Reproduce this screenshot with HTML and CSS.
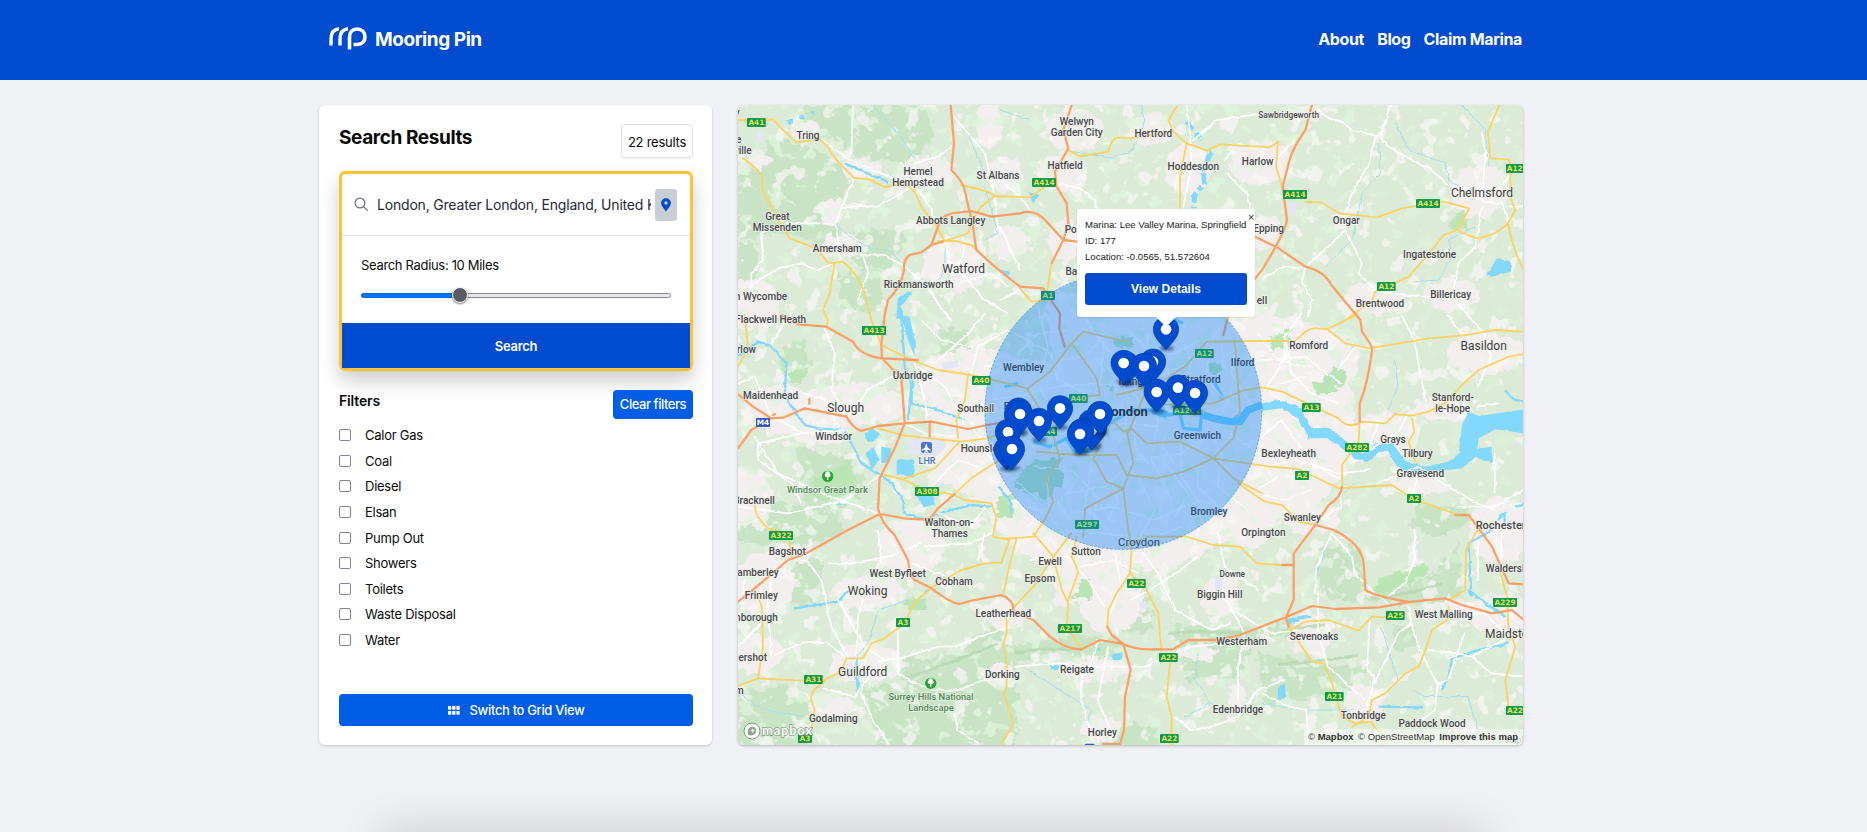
FILE: index.html
```html
<!DOCTYPE html>
<html lang="en">
<head>
<meta charset="utf-8">
<title>Mooring Pin</title>
<link rel="stylesheet" href="styles.css">
</head>
<body>
<header class="header">
  <div class="header-inner">
    <a class="brand">
      <svg class="logo" width="38" height="24" viewBox="0 0 38 24" fill="none" stroke="#fff">
        <path d="M2 18.500V12C2 6 5 2.300 10 1.700" stroke-width="3.400"/>
        <path d="M11 18.500V12C11 6 14 2.300 19 1.700" stroke-width="3.400"/>
        <path d="M20.500 22.500V10.500C20.500 5 23.500 2 28 2c5 0 8 3.200 8 8s-3 7.500-8 7.500h-3.500" stroke-width="3.600"/>
      </svg>
      <span class="brand-name">Mooring Pin</span>
    </a>
    <nav class="nav"><a>About</a><a>Blog</a><a>Claim Marina</a></nav>
  </div>
</header>
<main class="main">
  <aside class="panel">
    <div class="title-row"><h1>Search Results</h1><span class="count">22 results</span></div>
    <form class="search">
      <div class="search-row">
        <svg width="15" height="15" viewBox="0 0 15 15" fill="none" stroke="#6b7280" stroke-width="1.200"><circle cx="6" cy="6" r="4.900"/><path d="M9.500 9.500l4.300 4.300"/></svg>
        <span class="query">London, Greater London, England, United Kingdom</span>
        <span class="locate"><svg width="10" height="14" viewBox="0 0 10 14"><path fill="#004bce" fill-rule="evenodd" d="M5 .3C2.300.3.100 2.400.1 5.100.1 7.500 3 11 5 13.500 7 11 9.900 7.500 9.900 5.100 9.900 2.400 7.700.3 5 .3zM5 3.300a1.700 1.700 0 110 3.400 1.700 1.700 0 010-3.400z"/></svg></span>
      </div>
      <div class="radius">
        <label>Search Radius: 10 Miles</label>
        <div class="track"><div class="fill"></div><div class="thumb"></div></div>
      </div>
      <div class="submit">Search</div>
    </form>
    <div class="filter-head"><h2>Filters</h2><span class="clear">Clear filters</span></div>
    <ul class="filters">
      <li><i></i>Calor Gas</li><li><i></i>Coal</li><li><i></i>Diesel</li><li><i></i>Elsan</li><li><i></i>Pump Out</li><li><i></i>Showers</li><li><i></i>Toilets</li><li><i></i>Waste Disposal</li><li><i></i>Water</li>
    </ul>
    <div class="switch"><svg width="12" height="9" viewBox="0 0 12 9" fill="#fff"><rect width="3.300" height="3.800" rx=".6"/><rect x="4.200" width="3.300" height="3.800" rx=".6"/><rect x="8.400" width="3.300" height="3.800" rx=".6"/><rect y="4.900" width="3.300" height="3.800" rx=".6"/><rect x="4.200" y="4.900" width="3.300" height="3.800" rx=".6"/><rect x="8.400" y="4.900" width="3.300" height="3.800" rx=".6"/></svg>Switch to Grid View</div>
  </aside>
  <section class="map">
  <svg class="canvas" viewBox="0 15 2355 1920" preserveAspectRatio="none">
    <defs>
      <filter id="rough" x="0" y="0" width="100%" height="100%"><feTurbulence type="fractalNoise" baseFrequency=".035" numOctaves="3" seed="4"/><feDisplacementMap in="SourceGraphic" scale="44" xChannelSelector="R" yChannelSelector="G"/></filter>
      <filter id="wiggle" x="0" y="0" width="100%" height="100%"><feTurbulence type="fractalNoise" baseFrequency=".05" numOctaves="2" seed="9"/><feDisplacementMap in="SourceGraphic" scale="10" xChannelSelector="R" yChannelSelector="G"/></filter>
      <filter id="woods" x="0" y="0" width="100%" height="100%"><feTurbulence type="fractalNoise" baseFrequency=".022" numOctaves="3" seed="21"/><feColorMatrix values="0 0 0 0 .745  0 0 0 0 .905  0 0 0 0 .725  16 0 0 0 -9.600"/></filter>
      <filter id="clearing" x="0" y="0" width="100%" height="100%"><feTurbulence type="fractalNoise" baseFrequency=".02" numOctaves="3" seed="33"/><feColorMatrix values="0 0 0 0 .955  0 0 0 0 .94  0 0 0 0 .935  0 16 0 0 -10"/></filter>
      <filter id="soft" x="-50%" y="-100%" width="200%" height="300%"><feGaussianBlur stdDeviation="5"/></filter>
      <g id="pin"><ellipse cx="2" cy="57" rx="22" ry="8" fill="#001a40" opacity=".5" filter="url(#soft)"/><path d="M0-38C-22-38-38-21-38 0-38 22-18 42 0 61 18 42 38 22 38 0 38-21 22-38 0-38z" fill="#004bce" stroke="#003fae" stroke-width="2"/><circle r="16" fill="#fff"/></g>
    </defs>
    <rect y="15" width="2357" height="1920" fill="#dcebd7"/>
    <g filter="url(#rough)">
      <g fill="#c9e4c5">
        <path d="M0 220L70 200 100 110 220 140 290 180 340 250 290 330 300 420 240 430 130 400 0 420zM190 15H345L350 150 280 125 210 90zM375 15H560L590 110 540 170 490 190 420 180 350 160zM330 400L480 380 510 430 450 500 380 510 310 450zM0 430L60 430 60 540 0 560z"/>
        <path d="M300 520L420 510 440 600 400 640 300 620zM130 740L200 720 220 800 140 820zM170 1040L330 1070 390 1170 340 1220 200 1225zM0 1240L80 1210 300 1230 320 1300 200 1340 0 1330z"/>
        <path d="M140 1340L260 1390 230 1520 100 1500zM0 1780L140 1760 220 1830 210 1960H-20zM370 1760L500 1760 620 1690 780 1610 830 1640 830 1960H430zM420 1690L640 1660 800 1560 790 1680 500 1740z"/>
        <path d="M800 1640L960 1610 1100 1610 1180 1640 1060 1680 960 1650 830 1690zM1150 1480L1240 1500 1250 1590 1150 1600zM1300 1570L1500 1590 1650 1560 1760 1560 1780 1600 1560 1620 1500 1730 1340 1740zM1560 1660L1700 1680 1780 1700 1900 1700 1840 1760 1580 1830z"/>
        <path d="M1740 1340L1860 1340 1890 1500 2080 1430 2160 1330 2180 1480 2090 1510 1960 1510 1860 1510 1740 1490zM1960 1580L2030 1580 2040 1640 1980 1660zM2040 1200L2180 1220 2200 1270 2100 1310 2020 1280z"/>
        <path d="M1080 1870L1260 1880 1250 1960H1080zM2140 350L2200 330 2180 400 2130 380zM800 1760L850 1780 830 1960H790zM600 690L690 690 700 790 610 800z"/>
      </g>
      <g fill="#f3efee">
        <path d="M960 800Q890 640 950 560 980 610 1060 560 1160 470 1290 500L1360 560 1500 560 1600 640 1800 690 1870 760 1840 860 1850 970 1890 1060 1790 1150 1740 1230 1620 1260 1560 1350 1440 1330 1310 1410 1150 1400 1080 1500 960 1520 940 1410 800 1330 740 1220 640 1160 570 1160 600 1020 540 900 560 780 700 740z"/>
        <ellipse cx="195" cy="92" rx="42" ry="28"/><ellipse cx="565" cy="215" rx="90" ry="48"/><ellipse cx="655" cy="490" rx="100" ry="85"/><ellipse cx="310" cy="440" rx="55" ry="42"/><ellipse cx="280" cy="335" rx="34" ry="44"/><ellipse cx="375" cy="205" rx="65" ry="28"/><ellipse cx="40" cy="610" rx="85" ry="75"/><ellipse cx="800" cy="225" rx="55" ry="55"/><ellipse cx="755" cy="70" rx="38" ry="75"/><ellipse cx="60" cy="180" rx="38" ry="24"/>
        <ellipse cx="1010" cy="90" rx="85" ry="65"/><ellipse cx="970" cy="220" rx="75" ry="55"/><ellipse cx="1240" cy="90" rx="65" ry="48"/><ellipse cx="1350" cy="210" rx="68" ry="75"/><ellipse cx="1570" cy="190" rx="95" ry="65"/><ellipse cx="980" cy="420" rx="50" ry="62"/><ellipse cx="810" cy="430" rx="60" ry="50"/><ellipse cx="1580" cy="400" rx="48" ry="48"/><ellipse cx="1700" cy="40" rx="60" ry="24"/>
        <ellipse cx="2225" cy="275" rx="90" ry="80"/><ellipse cx="1825" cy="350" rx="35" ry="20"/><ellipse cx="1910" cy="600" rx="90" ry="48"/><ellipse cx="2140" cy="585" rx="85" ry="48"/><ellipse cx="2060" cy="480" rx="40" ry="15"/><ellipse cx="2240" cy="760" rx="120" ry="65"/><ellipse cx="2110" cy="930" rx="90" ry="30"/><ellipse cx="1950" cy="1000" rx="105" ry="62"/><ellipse cx="2050" cy="1150" rx="85" ry="36"/><ellipse cx="2290" cy="1290" rx="95" ry="100"/><ellipse cx="2290" cy="1540" rx="100" ry="62"/><ellipse cx="2140" cy="1520" rx="65" ry="24"/>
        <ellipse cx="120" cy="930" rx="105" ry="75"/><ellipse cx="340" cy="915" rx="180" ry="62"/><ellipse cx="250" cy="1000" rx="85" ry="35"/><ellipse cx="20" cy="1190" rx="85" ry="85"/><ellipse cx="80" cy="1450" rx="90" ry="95"/><ellipse cx="160" cy="1360" rx="60" ry="30"/><ellipse cx="390" cy="1480" rx="110" ry="50"/><ellipse cx="390" cy="1690" rx="110" ry="60"/><ellipse cx="50" cy="1660" rx="90" ry="60"/><ellipse cx="520" cy="1340" rx="100" ry="90"/><ellipse cx="280" cy="1820" rx="70" ry="40"/><ellipse cx="800" cy="1540" rx="65" ry="48"/><ellipse cx="790" cy="1730" rx="45" ry="35"/>
        <ellipse cx="1070" cy="1710" rx="120" ry="36"/><ellipse cx="1090" cy="1890" rx="60" ry="40"/><ellipse cx="1120" cy="1500" rx="95" ry="100"/><ellipse cx="1450" cy="1490" rx="60" ry="60"/><ellipse cx="1720" cy="1600" rx="65" ry="65"/><ellipse cx="1880" cy="1810" rx="60" ry="60"/><ellipse cx="1720" cy="1250" rx="90" ry="48"/><ellipse cx="1380" cy="1660" rx="60" ry="24"/><ellipse cx="1500" cy="1800" rx="30" ry="40"/><ellipse cx="2190" cy="1880" rx="45" ry="22"/>
      </g>
    </g>
    <rect y="15" width="1900" height="1920" filter="url(#woods)" opacity=".75"/>
    <rect x="1900" y="15" width="457" height="1920" filter="url(#woods)" opacity=".45"/>
    <rect y="15" width="2357" height="1920" filter="url(#clearing)" opacity=".65"/>
    <g filter="url(#rough)" fill="#bce5b6">
      <path d="M876 1085L966 1075 976 1155 916 1195 866 1180 826 1145zM780 1200L810 1180 835 1210 820 1255 780 1250zM986 1015L1030 1010 1030 1035 990 1035zM1416 790L1440 780 1450 820 1420 820zM1106 860L1126 855 1130 880 1106 880zM1130 715L1190 710 1180 740 1130 740zM1600 710L1660 690 1650 740 1600 750zM1730 850L1790 800 1830 830 1780 880 1730 885zM1920 1440L2060 1390 2080 1420 1900 1500zM2150 350L2190 330 2180 390 2140 370zM210 1150L340 1080 350 1180 250 1210zM150 820L200 800 210 840 170 850zM1010 1460L1060 1440 1060 1500 1000 1500zM500 1500L560 1490 560 1530 510 1530z"/>
    </g>
    <g fill="#e3e6f3"><path d="M510 1015H622V1045L585 1075 508 1060zM610 790L660 780 660 800 620 812zM1650 308L1675 310 1675 345 1650 345zM1430 1430L1455 1430 1450 1475 1432 1470zM60 90L78 100 75 130 55 125zM1205 1505L1225 1505 1220 1530 1205 1525z"/></g>
    <g fill="none" stroke="#b5d8b1" stroke-width="9" opacity=".8" filter="url(#wiggle)"><path d="M500 1735Q640 1690 780 1630M830 1660Q920 1640 1000 1650M1290 1600Q1400 1590 1530 1600M1760 1575Q1680 1580 1610 1600M1900 1495Q2030 1480 2110 1450M1620 1695Q1780 1680 1860 1665"/></g>
    <g class="water" filter="url(#wiggle)">
      <path class="area" d="M1572 910L1622 900 1692 923 1697 945 1722 985 1772 983 1832 1030 1872 1062 1912 1030 1962 1028 2002 1082 2062 1100 2132 1085 2162 1062 2172 975 2192 935 2222 948 2380 925V1003L2272 988 2222 1015 2215 1070 2172 1105 2072 1117 2002 1112 1972 1095 1952 1055 1922 1055 1892 1085 1852 1077 1802 1037 1767 1015 1712 1015 1682 957 1632 925 1572 932z"/>
      <path class="area" d="M380 1000L400 985 425 1000 410 1025 385 1025zM430 1040L460 1045 455 1085 430 1090zM385 1055L405 1040 425 1080 400 1110zM476 1080L528 1078 530 1130 476 1125zM535 1185L590 1190 585 1215 555 1222zM490 645L515 650 530 720 530 770 510 720zM2245 525L2280 475 2322 490 2318 515 2260 530zM145 60L165 55 165 70 148 72zM183 48L198 42 200 58 186 58zM215 35L232 32 228 45zM480 590L525 572 490 620 495 660 475 655zM790 508L815 515 810 530 792 530zM1120 1665L1155 1655 1150 1680 1125 1680zM1075 1650L1090 1640 1088 1660zM1620 1765L1640 1750 1645 1790 1620 1800zM935 1695L965 1695 960 1708 940 1708zM1655 1560L1690 1550 1680 1565 1650 1570zM870 275L905 285 885 310zM2200 1050L2260 1040 2265 1090 2230 1080zM300 1205L325 1215 295 1215zM560 1470L600 1465 560 1480z"/>
      <g class="lee"><path d="M1346 65L1390 120M1420 155L1395 210 1400 250 1370 285 1366 325M1346 330L1270 640"/></g>
      <g class="river"><path d="M0 770L60 725 100 740 145 790 140 890 200 975 240 985 320 990 350 1050 370 1090 450 1140 490 1190 500 1240 560 1260 620 1235 700 1215 760 1220M525 820L520 910 600 930 680 960M490 645L500 800 520 860 510 960M320 190L400 225 450 245M2262 1290L2192 1330 2195 1400 2200 1490 2190 1470 2272 1530 2302 1550M2312 1630L2222 1650 2142 1675 2132 1730 2112 1770M170 1525L300 1505 330 1470M355 1670L360 1780M1922 1820L2052 1822M1650 1560L1720 1550M780 1160L815 1200 820 1240M2300 870L2330 900 2357 905M2280 1260L2300 1240 2300 1270M2330 1220L2357 1215"/></g>
      <g class="stream"><path d="M400 15L490 110 530 180M295 375L350 420 400 445 460 455 500 500M620 440L622 500 600 540M1206 15L1221 60 1186 150 1126 175 1006 155M786 30L876 60M1972 65L2012 150 2122 190 2132 240 2172 265M1922 130L1927 220 1872 280 1842 420 1762 500M2172 15L2242 90 2252 200M2032 545L2102 540 2142 470 2132 420 2212 380M510 1500L420 1530 400 1600 390 1630 355 1670M870 1710L920 1740 980 1780 1030 1810 1060 1830 1050 1880M1380 1660L1370 1740 1420 1810 1340 1850M1930 1580L1960 1680 1980 1740M1572 1810L1690 1830 1850 1830M2020 1770L2060 1790 2190 1790 2230 1930M1740 1400L1730 1450 1770 1320M1760 850L1810 800 1850 730M1970 780L1980 860 1950 930M1850 1150L1820 1180M0 1780L80 1830 200 1850M740 260L780 400 740 420M690 100L740 220"/></g>
    </g>
    <g class="london-water"><path d="M786 1005L800 1030M886 1025L936 1040 986 1015 1006 1050 1056 1055 1086 985 1116 970 1180 930 1246 930 1286 945 1326 940 1336 985 1386 990 1390 945 1426 955 1476 965 1506 945 1536 930 1596 915"/><path d="M1300 655l35 15M1426 840l30 60M800 860l40 -10"/></g>
    <g class="minor" filter="url(#wiggle)"><path d="M348 235L310 325 292 370 300 420 305 485M250 118L335 180 500 250M375 465L440 465 500 500 560 550 610 625 640 660M0 610L50 550 120 505 190 490 240 512 290 487M648 50L690 100 740 160 760 240 770 290 780 390M530 190L600 170 640 140M680 425L675 470 640 520M310 325L360 318 420 320 520 262M545 270L580 330 590 380M620 430L640 500 690 540 760 520 810 560M690 540L740 600 810 640M130 370L70 400 75 480 40 520 40 560M140 370L250 370 292 375M375 465L390 520 360 600M345 15L340 165
      M951 250L1026 265 1071 300 1076 330M786 240L846 290 886 340M786 380L846 510M1346 15L1356 100 1361 200 1336 320M1466 220L1526 280 1536 330M786 600L846 570M1366 120L1440 60 1572 40M1460 180L1500 130 1560 150
      M1722 15L1772 55 1812 65 1842 90 1927 110 1957 15M1927 110L1952 140 2032 185 2082 210 2127 255 2192 270 2232 305 2292 310 2312 370M1912 110L1892 190 1837 290 1822 350M1822 390L1872 490 1862 520 1917 575 2052 590 2142 590 2202 660 2240 700M1822 390L1772 440 1702 500 1692 540 1722 600 1712 650M1572 540L1632 500 1692 505M2232 100L2242 160 2232 300M2232 320L2212 440 2162 490 2142 590M2317 320L2357 320M1672 120L1622 170M2260 300L2320 220
      M0 850L50 830 100 950 200 1000 320 990M50 1010L120 1120 250 1180 420 1240M0 1220L150 1240 320 1200 420 1130M190 1000L60 1030 60 1080 160 1150 190 1210M260 685L290 760 280 870 330 950M330 950L390 870 440 840 490 820M100 730L160 640M540 800L620 860 680 970M530 790L560 900 570 970M500 970L560 1000 660 1010M600 780L690 700 740 640M700 820L720 740 810 690M550 660L610 720 700 740M580 1160L660 1080 720 1100M700 970L760 1080M600 1240L700 1280 740 1220M300 980L260 900 200 880
      M165 1370L210 1385 250 1440 280 1580 330 1670M270 1390L340 1390 450 1370 550 1330M375 1500L360 1550 355 1670M110 1665L200 1625 270 1630 320 1670M420 1685L500 1670 600 1640 650 1640 810 1580M480 1590L480 1720 520 1745 590 1770 660 1770 740 1740 810 1735M370 1780L400 1850 450 1930M255 1765L350 1790 400 1720M650 1840L660 1890 720 1930M20 1440L0 1580M90 1520L100 1670M430 1390L420 1290M520 1390L600 1420 700 1460M560 1340L700 1330 760 1300M440 1680L380 1640 300 1500M720 1380L740 1300M0 1640L80 1560 110 1400
      M876 1380L986 1370 1050 1440 1100 1520M1026 1400L1126 1380 1200 1420M1130 1360L1150 1450 1110 1560M1200 1340L1260 1420 1310 1530 1420 1590 1480 1570M1380 1370L1300 1430 1180 1500M1080 1620L1060 1690 1030 1730 1030 1800 1060 1900M830 1700L950 1690 1070 1700 1220 1700 1350 1640 1480 1630M1110 1640L1080 1800 1130 1920M1450 1480L1500 1560 1520 1600 1500 1700 1500 1800M1310 1850L1360 1890 1420 1880 1500 1850 1560 1770 1640 1740M1440 1300L1460 1400 1560 1470M1500 1540L1600 1600 1680 1590
      M1730 1480L1735 1400 1782 1300 1842 1370 1850 1420 1910 1480 1950 1510M1950 1490L2000 1450 2030 1380 2030 1290M1740 1480L1740 1600 1770 1700 1880 1800M1572 1780L1650 1820 1705 1830 1710 1930M1895 1560L1887 1700 1910 1740 1885 1830M1910 1750L1980 1600 2020 1570M2010 1520L2030 1610 2080 1720 2100 1750 2090 1830 2040 1870M2070 1650L2160 1660 2200 1670 2300 1620M2180 1600L2130 1740 2100 1750M2120 1540L2240 1540 2300 1600M2200 1670L2260 1720 2357 1730M2290 1450L2290 1300M2220 1440L2220 1320
      M2130 645L2170 700 2240 700 2260 770 2220 860M1990 645L2030 720 2050 840 2070 930M1640 700L1660 820 1720 880 1800 910M1572 780L1700 770 1810 850M1572 880L1620 810 1690 700M1690 640L1640 710 1640 770M1800 810L1850 740 1900 750M1920 1150L2040 1100 2130 1160 2200 1200 2270 1230M2270 1060L2270 1180M2040 1120L2020 1200M1572 1010L1630 960 1720 1090 1810 1140M1572 1100L1680 1080 1800 1120 1900 1110M1620 1130L1560 1170M1810 1160L1810 1220 1740 1260M2160 1220L2270 1220 2357 1170M1920 970L1890 1050 1980 1000 2010 940M2220 920L2280 910"/></g>
    <g class="local" filter="url(#wiggle)"><path d="M830 700L940 760 960 840 1080 900M900 620L930 740 900 850 960 960 940 1060M1010 600L1070 700 1140 790 1170 900 1160 1010M1100 700L1090 830 1050 930 990 960M1230 700L1220 850 1260 960 1240 1080 1300 1200M1320 680L1360 790 1320 900M1430 700L1400 830 1460 900 1540 860M1500 700L1480 820 1550 930M760 900L870 880 960 860 1060 850 1200 860 1350 790M800 1000L910 960 1050 1010 1150 970 1260 980M890 1100L1000 1110 1080 1190 1060 1310M990 1180L1100 1160 1190 1080 1330 1060 1420 1000M1000 1240L1120 1220 1250 1260 1380 1200 1470 1230M1130 1080L1200 1130 1250 1230 1190 1340M1330 1030L1330 1130 1400 1230 1370 1330M1400 970L1450 1060 1440 1160 1530 1230M1170 690L1240 760 1310 760 1390 720M980 1290L1100 1300 1230 1320 1330 1280M1480 1000L1560 1060 1600 1130M1560 700L1620 780 1700 800M820 1200L930 1240 1000 1330M870 1280L930 1220 930 1130M760 1100L830 1140 900 1200M1060 1100L1040 1220 1110 1290M850 1000L850 1080M740 800L850 780 920 790M1540 1180L1640 1200 1720 1170M1600 860L1700 830M840 760L900 700 990 690M1180 760L1150 830 1200 900M1290 830L1250 900 1300 930M960 780L1040 770 1090 720M1120 1140L1140 1200 1110 1260M1290 1100L1350 1180 1310 1250M1380 1090L1380 1160 1440 1220M900 900L840 940 780 930M1450 740L1460 800 1420 850M1010 1150L960 1210 1000 1260M1190 950L1190 1040 1230 1090M1290 990L1270 1040 1310 1090"/></g>
    <g class="primary"><path d="M0 60L105 58 130 85 175 127 245 118Q272 140 280 160L300 185 348 234 395 238 440 261 500 250 530 275 550 320 600 385 620 423 690 400Q705 350 730 320L770 288 876 292 926 255 955 235M670 255L740 272 770 285M15 175Q70 215 73 235V270L130 375 155 415 235 445 272 490 315 485Q370 530 385 600L400 660 430 735 520 780 600 810 700 825 870 865 936 815 1001 730 1036 695 1166 725M290 487L275 580 255 630 270 660 265 680M600 423L652 423 700 435 760 490
      M991 150L1026 170 1111 155Q1120 115 1140 112L1176 115 1306 95 1291 60 1316 20M1306 95L1346 130 1326 230 1326 330M1346 130L1406 152 1446 133 1596 142 1620 125 1614 200 1634 265M941 490Q932 530 928 580L910 600M846 565L880 605 930 600
      M1702 305L1752 308 1802 340 1917 352 1992 325 2117 305 2194 325 2157 390 2117 405 2082 450 2012 530 1912 575 1902 600 1824 660 1767 687M2157 390L2212 415Q2270 410 2310 370L2332 330 2317 290 2317 190 2312 178 2257 175 2250 95 2284 15M2310 370Q2325 450 2357 510
      M0 800L30 745 20 645M690 825L680 905 655 960 660 1015M420 985L500 1007 670 1025 745 1015 830 990M500 1135L590 1105 665 1025M440 1125L500 1140 550 1165 650 1185 680 1200 760 1210 775 1250 765 1310 810 1320M650 1180L700 1135 830 1050M50 1215Q50 1250 90 1285L150 1300 160 1370
      M866 865L936 975 966 1075 926 1135 946 1205 920 1260 886 1310M1001 730L1076 835 1086 885 986 895M1136 885L1256 855 1346 795 1406 725 1572 723 1672 723Q1710 680 1740 685L1767 687 1857 645M1116 955L1156 995 1180 985 1226 1030 1326 1025 1426 1075 1486 1135 1572 1180M1116 975L1066 1075 1106 1145 1156 1165 1171 1290 1181 1340 1176 1420 1136 1480 1111 1530 1108 1580M896 1055L1016 1065 1136 1065 1166 1125 1256 1135 1336 1115 1426 1075 1486 1015 1506 935 1490 720M1236 915L1426 910 1520 870 1572 862 1632 875 1802 955Q1830 990 1872 965L1942 970 1972 942 2022 947 2072 935 2127 905 2172 855 2222 810 2312 770 2357 763M1166 995L1186 1085 1156 1165 1041 1225 1036 1310M1426 1075L1596 1100 1682 1107 1802 1165 1962 1155 2022 1195 2152 1242M1767 687L1822 730 1892 745 2072 715 2172 707 2272 690 2357 695M1865 965L1862 1025 1812 1095 1812 1160M2022 955L2029 995 2012 1025 2032 1085M1500 1150L1580 1205 1632 1215 1682 1265 1732 1275M1220 880L1170 1000
      M45 1475Q70 1500 72 1530L75 1640 60 1735 0 1758M60 1735L250 1745 310 1715 325 1675 375 1675 400 1630 440 1615 500 1570 530 1505 600 1450 670 1410 740 1390 790 1388 816 1315 890 1310M260 1745Q215 1770 220 1800L230 1830 215 1910
      M1176 1420L1226 1470 1261 1540 1266 1610 1271 1650M1296 1690L1286 1790 1301 1850 1301 1935M886 1300L946 1370 971 1470 991 1510 986 1580 1026 1640M1016 1310L1001 1370 1021 1415 991 1500M946 1370L1000 1300M820 1530L886 1460 946 1370M786 1315L836 1315 816 1390 796 1480M806 1550V1600L796 1630 806 1690V1760L796 1780Q830 1870 821 1880L791 1930M1160 1340L1230 1310 1346 1310 1426 1335 1506 1340 1556 1390 1632 1395
      M1652 1580L1692 1640 1722 1685 1757 1690 1782 1750 1812 1850 1852 1870 1902 1865M1657 1590L1702 1565 1772 1560 1862 1592 1902 1550 1942 1552M2132 1520L2127 1560 2082 1590 2062 1650 2042 1700 2002 1720 1972 1750 1942 1780 1902 1800 1892 1850 1842 1880M2132 1500L2182 1470 2184 1350 2212 1300 2240 1270M2287 1420L2307 1490 2312 1590 2332 1640 2302 1740 2312 1820M1902 1870L1932 1910 1932 1935"/></g>
    <g class="motorway"><path d="M638 15L648 130 640 210Q675 245 680 270L705 380 715 450 770 500 846 560 916 565 966 640 964 685 980 740M430 735L440 645 450 600Q490 560 498 510 495 480 515 465L550 457 580 435 600 380Q610 340 660 338L700 333 760 350 846 340Q890 325 926 365L976 420 1018 425M580 435L615 425M1001 15L976 90 991 145 951 215 956 260 986 310 991 370 976 420 941 490M1551 410L1622 445 1702 500Q1760 515 1780 555L1867 660 1872 695Q1905 740 1902 750 1890 850 1865 910V965M1722 15L1702 90Q1660 150 1652 190L1634 260 1647 360Q1640 400 1572 510L1500 600 1471 645 1456 705
      M0 883L45 920 100 955 135 953 200 925 325 950Q345 985 370 993L420 978 500 970 580 965 690 987 810 963M0 1045L40 990 100 955M130 645L180 673 265 680 345 725Q365 765 430 775L540 780M430 735L432 775 490 835 495 895 500 970 470 1045 425 1135 420 1225Q430 1270 470 1305L510 1380Q515 1430 530 1440L580 1465Q640 1510 665 1512L700 1502 790 1485Q830 1500 826 1535L886 1560 936 1610Q985 1650 1031 1648L1086 1620 1156 1632Q1190 1650 1250 1648H1306L1351 1620 1436 1620 1506 1605 1642 1552 1722 1518 1792 1527 1922 1522 2022 1505 2122 1495 2172 1515 2262 1540 2322 1530 2357 1560M0 1505L50 1465 150 1380 205 1360 330 1290 425 1242 500 1255Q560 1260 575 1257L600 1225 650 1182M575 965V1010M214 897V911M1108 1580L1121 1605 1156 1632 1178 1710 1161 1790 1158 1890 1146 1932H1096M1812 1160Q1810 1190 1772 1215L1732 1275 1667 1360V1500L1644 1552 1652 1580M1732 1275L1787 1290Q1870 1330 1877 1390L1882 1470Q1910 1490 2022 1507M2152 1245L2192 1245 2222 1285 2262 1340 2312 1450 2357 1453M1632 1395L1667 1395M105 945l6 -3"/></g>
    <circle cx="1156" cy="933" r="415" fill="#007bff" fill-opacity=".36" stroke="#2f86e4" stroke-width="2" stroke-dasharray="8 4"/>
    <g class="thames"><path d="M1246 930L1286 945M1396 945L1426 955 1476 965 1506 965 1530 930 1572 915"/></g>
    <g class="labels">
      <text x="210" y="116">Tring</text><text x="-8" y="48">ry</text><text x="-2" y="129">le</text><text x="14" y="162">ville</text><text x="540" y="225">Hemel</text><text x="540" y="258">Hempstead</text><text x="118" y="360">Great</text><text x="118" y="392">Missenden</text><text x="298" y="457">Amersham</text><text x="638" y="371">Abbots Langley</text><text class="town" x="677" y="519">Watford</text><text x="542" y="565">Rickmansworth</text><text x="46" y="600">High Wycombe</text><text x="780" y="237">St Albans</text>
      <g transform="translate(786 0)"><text x="230" y="75">Welwyn</text><text x="230" y="107">Garden City</text><text x="460" y="112">Hertford</text><text x="195" y="206">Hatfield</text><text x="580" y="211">Hoddesdon</text><text x="773" y="194">Harlow</text><text x="212" y="400">Po</text><text x="214" y="524">Ba</text><text x="806" y="395">Epping</text><text x="786" y="612">ell</text></g>
      <g transform="translate(1572 0)"><text class="small" x="80" y="54">Sawbridgeworth</text><text x="253" y="373">Ongar</text><text class="town" x="660" y="291">Chelmsford</text><text x="503" y="473">Ingatestone</text><text x="566" y="595">Billericay</text><text x="354" y="620">Brentwood</text></g>
      <g transform="translate(0 645)"><text x="98" y="24">Flackwell Heath</text><text x="4" y="114">Marlow</text><text x="98" y="252">Maidenhead</text><text class="town" x="323" y="291">Slough</text><text x="287" y="374">Windsor</text><text x="524" y="192">Uxbridge</text><text x="713" y="290">Southall</text><text x="735" y="412">Hounslow</text><text class="park" x="268" y="533">Windsor Great Park</text><text x="48" y="566">Bracknell</text><text x="633" y="633">Walton-on-</text><text x="635" y="665">Thames</text><text class="air" x="567" y="446">LHR</text></g>
      <g transform="translate(786 645)" class="in"><text x="71" y="167">Wembley</text><text x="52" y="285">Ealing</text><text x="414" y="211">Islington</text><text x="602" y="203">Stratford</text><text class="city" x="378" y="303">London</text><text x="728" y="153">Ilford</text><text x="592" y="373">Greenwich</text><text x="627" y="600">Bromley</text></g>
      <g transform="translate(1572 645)"><text x="140" y="101">Romford</text><text class="town" x="665" y="106">Basildon</text><text x="572" y="257">Stanford-</text><text x="572" y="290">le-Hope</text><text x="393" y="384">Grays</text><text x="466" y="427">Tilbury</text><text x="475" y="487">Gravesend</text><text x="80" y="425">Bexleyheath</text><text x="121" y="619">Swanley</text><text style="font-size:33px" x="716" y="642">Rochester</text></g>
      <g transform="translate(0 1290)"><text x="148" y="74">Bagshot</text><text x="50" y="138">Camberley</text><text x="70" y="206">Frimley</text><text x="34" y="273">Farnborough</text><text x="22" y="394">Aldershot</text><text x="-42" y="492">Farnham</text><text x="479" y="142">West Byfleet</text><text class="town" x="389" y="194">Woking</text><text x="648" y="164">Cobham</text><text x="796" y="262">Leatherhead</text><text class="town" x="374" y="437">Guildford</text><text x="286" y="577">Godalming</text><text class="park" x="579" y="510">Surrey Hills National</text><text class="park" x="579" y="544">Landscape</text><text x="793" y="443">Dorking</text></g>
      <g transform="translate(786 1290)"><text class="in croydon" x="417" y="47">Croydon</text><text x="258" y="76">Sutton</text><text x="150" y="106">Ewell</text><text x="120" y="156">Epsom</text><text x="231" y="429">Reigate</text><text x="307" y="617">Horley</text><text class="small" x="697" y="141">Downe</text><text x="659" y="203">Biggin Hill</text><text x="725" y="344">Westerham</text><text x="714" y="548">Edenbridge</text><text x="790" y="19">Orpington</text></g>
      <g transform="translate(1572 1290)"><text x="156" y="330">Sevenoaks</text><text x="545" y="264">West Malling</text><text x="754" y="127">Walderslade</text><text class="town" x="754" y="323">Maidstone</text><text x="304" y="568">Tonbridge</text><text x="510" y="590">Paddock Wood</text><text class="small faint" x="762" y="640">Staple</text></g>
    </g>
    <g class="shields">
      <rect x="27" y="54" width="56" height="27"/><text x="55" y="76">A41</text>
      <rect x="882" y="234" width="72" height="27"/><text x="918" y="256">A414</text>
      <rect x="1635" y="270" width="72" height="27"/><text x="1671" y="292">A414</text>
      <rect x="2034" y="297" width="72" height="27"/><text x="2070" y="319">A414</text>
      <rect x="2304" y="192" width="56" height="27"/><text x="2330" y="214">A12</text>
      <rect x="1917" y="546" width="56" height="27"/><text x="1945" y="568">A12</text>
      <rect x="372" y="678" width="72" height="27"/><text x="408" y="700">A413</text>
      <rect x="702" y="828" width="56" height="27"/><text x="730" y="850">A40</text>
      <rect x="531" y="1161" width="72" height="27"/><text x="567" y="1183">A308</text>
      <rect x="93" y="1293" width="72" height="27"/><text x="129" y="1315">A322</text>
      <rect x="1692" y="909" width="56" height="27"/><text x="1720" y="931">A13</text>
      <rect x="1821" y="1029" width="72" height="27"/><text x="1857" y="1051">A282</text>
      <rect x="1671" y="1113" width="42" height="27"/><text x="1692" y="1135">A2</text>
      <rect x="2007" y="1182" width="42" height="27"/><text x="2028" y="1204">A2</text>
      <rect x="474" y="1554" width="42" height="27"/><text x="495" y="1576">A3</text>
      <rect x="198" y="1725" width="56" height="27"/><text x="226" y="1747">A31</text>
      <rect x="180" y="1902" width="42" height="27"/><text x="201" y="1924">A3</text>
      <rect x="1167" y="1437" width="56" height="27"/><text x="1195" y="1459">A22</text>
      <rect x="960" y="1572" width="72" height="27"/><text x="996" y="1594">A217</text>
      <rect x="1263" y="1659" width="56" height="27"/><text x="1291" y="1681">A22</text>
      <rect x="1266" y="1902" width="56" height="27"/><text x="1294" y="1924">A22</text>
      <rect x="1944" y="1533" width="56" height="27"/><text x="1972" y="1555">A25</text>
      <rect x="2265" y="1494" width="72" height="27"/><text x="2301" y="1516">A229</text>
      <rect x="1761" y="1776" width="56" height="27"/><text x="1789" y="1798">A21</text>
      <rect x="2304" y="1818" width="72" height="27"/><text x="2331" y="1840">A22</text>
      <g class="tinted"><rect x="909" y="573" width="42" height="27"/><text x="930" y="595">A1</text>
      <rect x="1371" y="747" width="56" height="27"/><text x="1399" y="769">A12</text>
      <rect x="993" y="882" width="56" height="27"/><text x="1021" y="904">A40</text>
      <rect x="915" y="981" width="42" height="27"/><text x="936" y="1003">A4</text>
      <rect x="1305" y="918" width="84" height="27"/><text x="1347" y="940">A1261</text>
      <rect x="1011" y="1260" width="72" height="27"/><text x="1047" y="1282">A297</text></g>
      <g class="m"><rect x="54" y="954" width="42" height="27"/><text x="75" y="976">M4</text><rect x="1041" y="1931" width="28" height="8"/></g>
    </g>
    <g><rect x="549" y="1026" width="33" height="33" rx="7" fill="#4a73cc"/><path d="M565 1031l3 4v7l11 7v3l-11-3v5l4 3v2l-7-2-7 2v-2l4-3v-5l-11 3v-3l11-7v-7z" fill="#fff"/>
      <g id="tree"><circle cx="269" cy="1129" r="17" fill="#28a33a"/><path d="M267 1139v-8h-3a6 6 0 01-2-10 7 7 0 0114 0 6 6 0 01-2 10h-3v8z" fill="#fff"/></g><use href="#tree" x="309" y="621"/></g>
    <g transform="translate(786 645)">
      <use href="#pin" x="380" y="150"/><use href="#pin" x="371" y="144"/><use href="#pin" x="459" y="140"/><use href="#pin" x="432" y="153"/><use href="#pin" x="534" y="218"/><use href="#pin" x="470" y="231"/><use href="#pin" x="585" y="234"/>
      <use href="#pin" x="56" y="287"/><use href="#pin" x="51" y="299"/><use href="#pin" x="60" y="297"/><use href="#pin" x="180" y="280"/><use href="#pin" x="117" y="318"/><use href="#pin" x="24" y="351"/><use href="#pin" x="20" y="404"/><use href="#pin" x="36" y="402"/>
      <use href="#pin" x="274" y="322"/><use href="#pin" x="283" y="336"/><use href="#pin" x="276" y="344"/><use href="#pin" x="300" y="297"/><use href="#pin" x="244" y="350"/><use href="#pin" x="240" y="357"/><use href="#pin" x="498" y="43"/>
    </g>
    <g transform="translate(42 1893)"><circle r="24" fill="#fff" stroke="#7e9b7c" stroke-width="3"/><path d="M-12 12C-15-6-8-14 2-13 12-12 15-3 11 5 7 12-2 15-12 12z" fill="#8fa68d"/><path d="M2-8l2 5 5 2-5 2-2 5-2-5-5-2 5-2z" fill="#fff"/></g>
    <text class="mapbox" x="72" y="1904" textLength="150">mapbox</text>
  </svg>
  <div class="popup"><span class="close">×</span><p>Marina: Lee Valley Marina, Springfield</p><p>ID: 177</p><p>Location: -0.0565, 51.572604</p><div class="details">View Details</div></div>
  <div class="credit"><span>© <b>Mapbox</b></span><span>© OpenStreetMap</span><b>Improve this map</b></div>
  </section>
</main>
<div class="below"></div>
</body>
</html>
```
FILE: styles.css
```css
* { box-sizing: border-box; margin: 0; padding: 0; }
body { height: 832px; overflow: hidden; background: #f0f1f5; color: #0a0a0a; font-family: Inter, "Liberation Sans", sans-serif; font-size: 14px; }
.header { height: 80px; background: #004bce; color: #fff; }
.header-inner { width: 1205px; margin-left: 319px; height: 78px; padding: 0 2px 0 10px; display: flex; align-items: center; justify-content: space-between; }
.brand { display: flex; align-items: center; gap: 8px; }
.logo { margin-top: -1px; }
.brand-name { font-size: 19px; font-weight: 700; letter-spacing: -.45px; }
.nav { display: flex; gap: 13px; font-size: 16px; font-weight: 700; letter-spacing: -.35px; }
.main { display: flex; gap: 26px; width: 1205px; margin: 25px 0 0 319px; height: 641px; }
.panel { width: 393px; height: 640px; padding: 19px 19px 19px 20px; background: #fff; border-radius: 6px; box-shadow: 0 1px 3px rgba(0,0,0,.18); display: flex; flex-direction: column; }
.title-row { display: flex; justify-content: space-between; height: 47px; }
h1 { font-size: 19px; line-height: 28px; letter-spacing: -.4px; }
.count { width: 72px; height: 34px; border: 1px solid #dfe1e6; border-radius: 4px; box-shadow: 0 1px 2px rgba(0,0,0,.08); font-size: 13px; line-height: 34px; text-align: center; letter-spacing: -.25px; white-space: nowrap; }
.search { height: 200px; border: 3px solid #ffc233; border-radius: 6px; box-shadow: 0 10px 20px rgba(0,0,0,.2); background: #fff; }
.search-row { height: 62px; border-bottom: 1px solid #e2e4e8; display: flex; align-items: center; padding: 0 13px 0 12px; }
.query { flex: 1; margin: 0 4px 0 8px; overflow: hidden; white-space: nowrap; font-size: 14px; letter-spacing: -.19px; color: #1f2937; }
.locate { width: 22px; height: 32px; flex: none; border-radius: 3px; background: #c9cdd6; display: flex; align-items: center; justify-content: center; }
.radius { height: 87px; padding: 20px 19px 0; font-size: 13px; }
.radius label { display: block; line-height: 18px; letter-spacing: -.32px; }
.track { position: relative; height: 5px; margin-top: 19px; border: 1px solid #858592; border-radius: 3px; background: #e9e9ed; }
.fill { width: 98px; height: 5px; margin: -1px; border-radius: 3px; background: #0075ff; border: 1px solid #0068e0; }
.thumb { position: absolute; left: 90px; top: -7px; width: 16px; height: 16px; border-radius: 50%; background: #5b5b66; border: 1px solid #fff; box-shadow: 0 1px 2px rgba(0,0,0,.5); }
.submit { height: 45px; background: #004bce; color: #fff; font-size: 13px; font-weight: 600; line-height: 46px; text-align: center; letter-spacing: -.3px; }
.filter-head { display: flex; justify-content: space-between; margin-top: 19px; height: 32px; }
h2 { font-size: 14px; font-weight: 600; line-height: 22px; letter-spacing: -.15px; }
.clear { width: 80px; height: 29px; border-radius: 4px; background: #005ee6; color: #fff; font-size: 13px; font-weight: 500; line-height: 29px; text-align: center; letter-spacing: -.45px; white-space: nowrap; }
.filters { list-style: none; }
.filters li { display: flex; align-items: center; gap: 14px; height: 25.6px; padding-top: 1px; font-size: 13px; letter-spacing: -.25px; }
.filters i { width: 12px; height: 12px; border: 1px solid #858592; border-radius: 2px; background: #fff; }
.switch { margin-top: auto; height: 32px; border-radius: 4px; background: #005ee6; color: #fff; display: flex; align-items: center; justify-content: center; gap: 10px; font-size: 13px; font-weight: 500; letter-spacing: -.35px; }
.map { position: relative; width: 785px; height: 640px; border-radius: 6px; overflow: hidden; box-shadow: 0 1px 3px rgba(0,0,0,.25); }
.canvas { display: block; width: 100%; height: 100%; }
.area { fill: #83d8fd; }
.water g { fill: none; stroke: #83d8fd; }
.water .river { stroke-width: 7; }
.water .stream { stroke-width: 3; stroke: #a6dcea; }
.water .lee { stroke-width: 15; stroke-dasharray: 32 12 18 7; }
.london-water, .thames { fill: none; stroke: #83d8fd; stroke-width: 10; stroke-linejoin: round; }
.thames { stroke: #4db2fb; stroke-width: 22; }
.minor, .local, .primary, .motorway { fill: none; stroke: #fff; stroke-width: 5; stroke-linejoin: round; stroke-linecap: round; }
.local { stroke-width: 3.5; opacity: .85; }
.primary { stroke: #fcd265; stroke-width: 5.5; }
.motorway { stroke: #ff9f66; stroke-width: 6.8; }
.labels text { font-family: Roboto, sans-serif; font-size: 30px; font-weight: 500; fill: #46494b; text-anchor: middle; stroke: #f5f5f1; stroke-width: 4px; stroke-opacity: .8; paint-order: stroke; }
.labels .town { font-size: 36px; font-weight: 400; fill: #3a3d3e; }
.labels .small { font-size: 25px; }
.labels .faint { opacity: .45; }
.labels .park { fill: #498a52; font-size: 28px; }
.labels .air { fill: #4a73cc; font-size: 27px; }
.labels .in text, .labels text.in { fill: #2b4c72; stroke: #a9cdf5; stroke-opacity: .4; }
.labels .croydon { font-size: 34px; font-weight: 400; }
.labels .in .city { font-size: 39px; font-weight: 700; fill: #173654; }
.shields rect { fill: #0a9a48; rx: 3px; }
.shields text { font: 700 22px "DejaVu Sans", sans-serif; fill: #e8e05f; text-anchor: middle; }
.shields .tinted rect { fill: #0a8f7e; }
.shields .tinted text { fill: #a7cf8f; }
.shields .m rect { fill: #3558c8; }
.shields .m text { fill: #fff; }
.mapbox { font: 700 39px Lato, sans-serif; fill: #fff; stroke: #819b7f; stroke-width: 4px; paint-order: stroke; }
.popup { position: absolute; left: 339px; top: 104px; width: 178px; height: 108px; padding: 8px; background: #fff; border-radius: 3px; box-shadow: 0 1px 2px rgba(0,0,0,.1); color: #222; font: 9.6px/16px "Liberation Sans", sans-serif; white-space: nowrap; }
.popup::after { content: ""; position: absolute; left: 79px; top: 108px; border: 10px solid transparent; border-top-color: #fff; border-bottom: 0; }
.close { position: absolute; right: 1px; top: 1px; font-size: 10px; line-height: 15px; }
.details { height: 32px; margin-top: 8px; border-radius: 3px; background: #004bce; color: #fff; font-size: 12px; font-weight: 700; line-height: 32px; text-align: center; }
.credit { position: absolute; right: 0; bottom: 0; display: flex; height: 16px; width: 219px; padding: 0 5px 0 4px; justify-content: space-between; background: rgba(255,255,255,.5); color: #333; font: 9.5px/16px "Liberation Sans", sans-serif; white-space: nowrap; }
.below { width: 1085px; height: 1px; margin: 86px 0 0 391px; box-shadow: 0 10px 42px 10px rgba(0,0,0,.22); }
```
